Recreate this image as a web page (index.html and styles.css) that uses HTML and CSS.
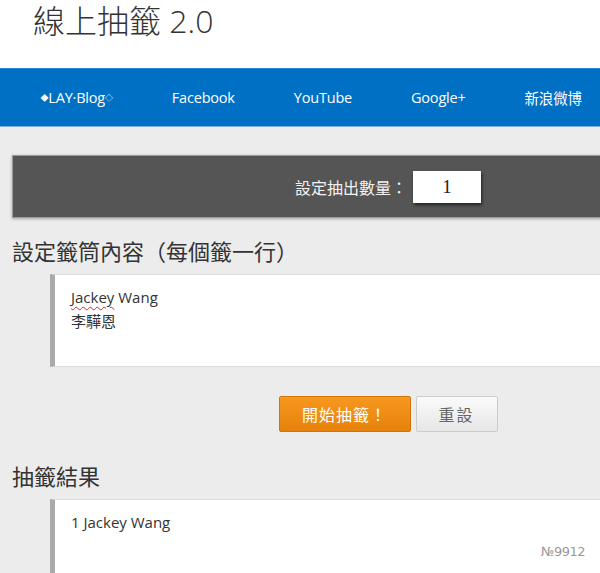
FILE: index.html
```html
<!DOCTYPE html>
<html lang="zh-Hant">
  <head>
    <meta charset="UTF-8" />
    <meta name="viewport" content="width=device-width, initial-scale=1.0" />
    <title>線上抽籤 2.0</title>
    <link rel="stylesheet" href="styles.css">
  </head>
  <body>
    <div class="page">
      <!-- 標題 -->
      <div class="header">
        <h1 class="title">線上抽籤 2.0</h1>
      </div>

      <!-- 選單 -->
      <div class="navbar">
        <a href="#"><span class="dot">◆</span>LAY·Blog<span class="dot">◇</span></a>
        <a href="#">Facebook</a>
        <a href="#">YouTube</a>
        <a href="#">Google+</a>
        <a href="#">新浪微博</a>
      </div>

      <div class="content">
        <div class="countBar">
          <span class="count-label">設定抽出數量：</span>
          <input class="count-input" type="text" value="1" />
        </div>

        <h2 class="section-title">設定籤筒內容（每個籤一行）</h2>
        <div class="box box-list">
          <div><span class="typo">Jackey</span> Wang</div>
          <div>李驊恩</div>
        </div>

        <div class="actions">
          <button class="btn btn-start">開始抽籤！</button>
          <button class="btn btn-reset">重設</button>
        </div>

        <h2 class="section-title result-title">抽籤結果</h2>
        <div class="box box-result">
          <div>1 Jackey Wang</div>
        </div>
      </div>

      <div class="counter">№9912</div>
    </div>
  </body>
</html>
```

FILE: styles.css
```css
/* 기본 */
* {
  font-family: "Open Sans", "Noto Sans CJK TC", sans-serif;
  padding: 0;
  margin: 0;
  box-sizing: border-box;
}
html,
body {
  overflow: hidden;
  background: #ececec;
}
.page {
  position: relative;
  width: 776px;
  min-height: 573px;
}

/* 標題 */
.header {
  height: 68px;
  background: #ffffff;
  padding: 2px 0 0 33px;
}
.title {
  font-size: 32px;
  line-height: 38px;
  font-weight: 300;
  color: #333;
}

/* 選單 */
.navbar {
  height: 59px;
  background: #0070c4;
  border-top: 1px solid #2f86cf;
  border-bottom: 1px solid #7fb0dc;
  display: flex;
  align-items: center;
  padding-left: 11px;
}
.navbar a {
  color: #ffffff;
  text-decoration: none;
  font-size: 14.5px;
  padding: 0 29.5px;
  letter-spacing: -0.2px;
}
.navbar .dot {
  font-size: 8px;
  vertical-align: 2px;
}

.content {
  padding: 28px 12px 0 12px;
}

/* 數量 */
.countBar {
  height: 63px;
  background: #555555;
  border: 1px solid #9a9a9a;
  box-shadow: 0 1px 3px rgba(0, 0, 0, 0.3);
  display: flex;
  align-items: center;
  justify-content: center;
  gap: 6px;
}
.count-label {
  color: #f2f2f2;
  font-size: 16px;
  font-family: "Noto Sans CJK TC", sans-serif;
}
.count-input {
  width: 68px;
  height: 32px;
  border: none;
  background: #fff;
  text-align: center;
  font-family: "Liberation Serif", serif;
  font-size: 19px;
  color: #222;
  box-shadow: 1px 2px 3px rgba(0, 0, 0, 0.6);
  outline: none;
}

.section-title {
  font-size: 22px;
  line-height: 30px;
  font-weight: 400;
  color: #333;
  font-family: "Noto Sans CJK TC", sans-serif;
  margin-top: 17px;
}
.result-title {
  margin-top: 28px;
}

/* 籤筒 */
.box {
  margin: 9px 0 0 38px;
  background: #ffffff;
  border-left: 5px solid #aaaaaa;
  border-top: 1px solid #dddddd;
  border-bottom: 1px solid #dddddd;
  padding: 10px 16px;
  font-size: 15px;
  line-height: 24px;
  color: #333;
}
.box-list {
  height: 93px;
}
.box-result {
  height: 90px;
}
.typo {
  text-decoration: underline wavy #d23;
  text-decoration-thickness: 1px;
  text-underline-offset: 3px;
}

/* 按鈕 */
.actions {
  display: flex;
  justify-content: center;
  gap: 5px;
  margin-top: 29px;
}
.btn {
  height: 36px;
  font-size: 16px;
  font-family: "Noto Sans CJK TC", sans-serif;
  border-radius: 2px;
  cursor: pointer;
}
.btn-start {
  width: 132px;
  color: #ffffff;
  letter-spacing: 1px;
  background: linear-gradient(#f8981f, #e6820b);
  border: 1px solid #cf7508;
}
.btn-reset {
  width: 82px;
  color: #666;
  letter-spacing: 2px;
  background: linear-gradient(#fbfbfb, #e6e6e6);
  border: 1px solid #cccccc;
}

.counter {
  position: absolute;
  left: 541px;
  top: 544px;
  font-size: 13px;
  color: #999;
  font-family: "DejaVu Sans", sans-serif;
  letter-spacing: -0.5px;
}
```
